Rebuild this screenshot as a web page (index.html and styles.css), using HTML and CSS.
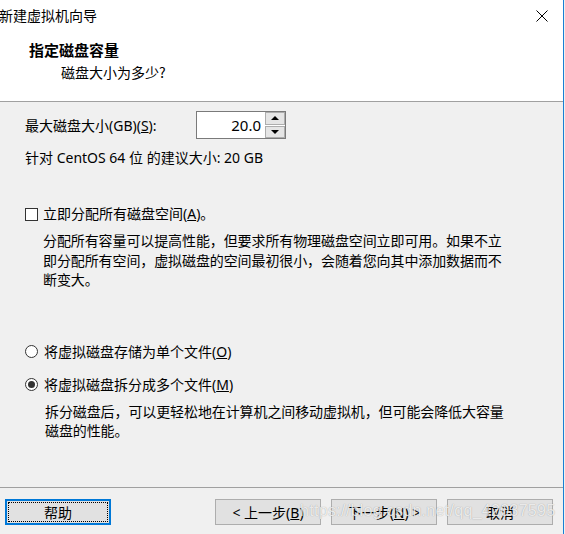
FILE: index.html
```html
<!DOCTYPE html>
<html lang="zh-CN">
<head>
<meta charset="utf-8">
<title>新建虚拟机向导</title>
<link rel="stylesheet" href="styles.css">
</head>
<body>
<div class="window">
  <div class="titlebar">
    <span class="title">新建虚拟机向导</span>
    <svg class="close" width="12" height="12" viewBox="0 0 12 12"><path d="M0.5 0.5 L11.5 11.5 M11.5 0.5 L0.5 11.5" stroke="#000" stroke-width="1" fill="none"/></svg>
  </div>
  <div class="header">
    <div class="h-title">指定磁盘容量</div>
    <div class="h-sub">磁盘大小为多少?</div>
  </div>
  <div class="main">
    <div class="size-row">
      <span class="size-label">最大磁盘大小(GB)(<u>S</u>):</span>
      <div class="spin">
        <span class="spin-value">20.0</span>
        <div class="spin-btns">
          <span class="spin-btn"><svg width="8" height="4" viewBox="0 0 8 4"><path d="M0 4 L4 0 L8 4 Z" fill="#000"/></svg></span>
          <span class="spin-btn"><svg width="8" height="4" viewBox="0 0 8 4"><path d="M0 0 L8 0 L4 4 Z" fill="#000"/></svg></span>
        </div>
      </div>
    </div>
    <div class="recommend">针对 CentOS 64 位 的建议大小: 20 GB</div>
    <div class="check-row">
      <span class="checkbox"></span>
      <span>立即分配所有磁盘空间(<u>A</u>)。</span>
    </div>
    <p class="desc">分配所有容量可以提高性能，但要求所有物理磁盘空间立即可用。如果不立<br>即分配所有空间，虚拟磁盘的空间最初很小，会随着您向其中添加数据而不<br>断变大。</p>
    <div class="radio-row first">
      <span class="radio"></span>
      <span>将虚拟磁盘存储为单个文件(<u>O</u>)</span>
    </div>
    <div class="radio-row second">
      <span class="radio checked"></span>
      <span>将虚拟磁盘拆分成多个文件(<u>M</u>)</span>
    </div>
    <p class="desc desc2">拆分磁盘后，可以更轻松地在计算机之间移动虚拟机，但可能会降低大容量<br>磁盘的性能。</p>
  </div>
  <div class="footer">
    <button class="btn help"><span class="focus">帮助</span></button>
    <div class="right-btns">
      <button class="btn">&lt; 上一步(<u>B</u>)</button>
      <button class="btn">下一步(<u>N</u>) &gt;</button>
      <button class="btn">取消</button>
    </div>
    <span class="watermark">https://blog.csdn.net/qq_42037595</span>
  </div>
</div>
</body>
</html>
```
FILE: styles.css
```css
html, body {
  margin: 0;
  padding: 0;
  background: #f0f0f0;
}
body {
  font-family: "Noto Sans", "Noto Sans CJK SC", sans-serif;
  font-size: 14px;
  color: #000;
}
.window {
  width: 563px;
  height: 534px;
  border-right: 1px solid #1a7fd4;
  display: flex;
  flex-direction: column;
  background: #f0f0f0;
  position: relative;
  overflow: hidden;
}
.titlebar {
  height: 30px;
  background: #fff;
  display: flex;
  align-items: center;
  justify-content: space-between;
  padding-left: 0;
  padding-right: 15px;
}
.title {
  font-family: "Noto Sans CJK SC", sans-serif;
  font-size: 14px;
  line-height: 30px;
  margin-left: -1px;
}
.close {
  display: block;
  margin-top: 1px;
}
.header {
  height: 72px;
  background: #fff;
  border-bottom: 1px solid #a0a0a0;
  box-sizing: border-box;
  padding-top: 10px;
}
.h-title {
  font-family: "Noto Sans CJK SC", sans-serif;
  font-weight: bold;
  font-size: 15px;
  line-height: 20px;
  padding-left: 29px;
}
.h-sub {
  font-family: "Noto Sans CJK SC", sans-serif;
  line-height: 20px;
  margin-top: 2px;
  padding-left: 61px;
}
.main {
  flex: 1;
  padding-left: 25px;
}
.size-row {
  display: flex;
  align-items: center;
  margin-top: 9px;
  height: 28px;
}
.size-label {
  width: 171px;
  flex: none;
}
.spin {
  width: 88px;
  height: 26px;
  border: 1px solid #7a7a7a;
  background: #fff;
  display: flex;
}
.spin-value {
  flex: 1;
  text-align: right;
  line-height: 26px;
  padding-right: 4px;
  font-size: 15px;
}
.spin-btns {
  width: 20px;
  display: flex;
  flex-direction: column;
  gap: 1px;
  padding: 0;
}
.spin-btn {
  flex: 1;
  background: #e5e5e5;
  border: 1px solid #adadad;
  display: flex;
  align-items: center;
  justify-content: center;
}
.spin-btn svg { display: block; }
.recommend {
  line-height: 20px;
  margin-top: 9px;
}
.check-row, .radio-row {
  display: flex;
  align-items: center;
  line-height: 20px;
}
.check-row {
  margin-top: 36px;
  gap: 5px;
}
.checkbox {
  width: 11px;
  height: 11px;
  border: 1px solid #333;
  background: #fff;
  flex: none;
}
.desc {
  margin: 7px 0 0 18px;
  line-height: 19.5px;
  letter-spacing: -0.1px;
  font-family: "Noto Sans CJK SC", sans-serif;
}
.radio-row {
  gap: 6px;
}
.radio-row.first { margin-top: 52px; }
.radio-row.second { margin-top: 13px; }
.radio {
  width: 11px;
  height: 11px;
  border: 1px solid #333;
  border-radius: 50%;
  background: #fff;
  flex: none;
  display: flex;
  align-items: center;
  justify-content: center;
}
.radio.checked::after {
  content: "";
  width: 7px;
  height: 7px;
  border-radius: 50%;
  background: #333;
}
.desc2 {
  margin-top: 7px;
  margin-left: 20px;
}
.footer {
  height: 47px;
  box-sizing: border-box;
  border-top: 1px solid #a0a0a0;
  display: flex;
  align-items: flex-start;
  justify-content: space-between;
  padding: 11px 10px 0 5px;
  position: relative;
}
.right-btns {
  display: flex;
  gap: 10px;
}
.btn {
  width: 106px;
  height: 26px;
  background: #e1e1e1;
  border: 1px solid #adadad;
  font-family: "Noto Sans", "Noto Sans CJK SC", sans-serif;
  font-size: 14px;
  color: #000;
  padding: 0;
  margin: 0;
  display: flex;
  align-items: center;
  justify-content: center;
}
.btn.help {
  border: 2px solid #0078d7;
  padding: 1px;
}
.focus {
  flex: 1;
  align-self: stretch;
  display: flex;
  align-items: center;
  justify-content: center;
  border: 1px dotted #000;
}
.watermark {
  position: absolute;
  left: 300px;
  top: 14px;
  font-family: "Liberation Sans", sans-serif;
  font-size: 16px;
  color: rgba(255, 255, 255, 0.8);
  text-shadow: 0 0 1px rgba(0, 0, 0, 0.35);
  pointer-events: none;
  letter-spacing: 0.3px;
}
```
